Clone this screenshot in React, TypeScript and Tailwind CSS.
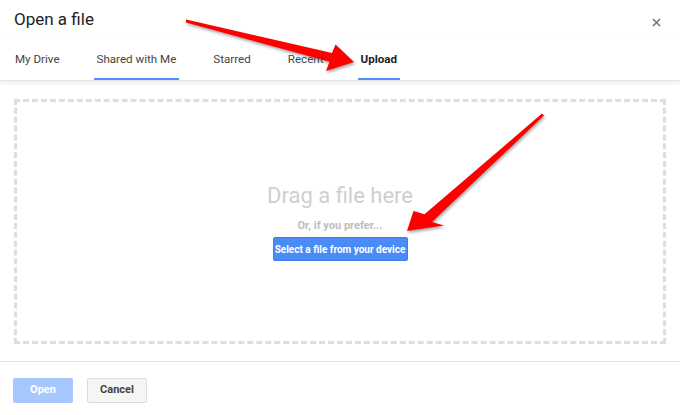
import React from "react";

const tabs = ["My Drive", "Shared with Me", "Starred", "Recent", "Upload"];

function Arrows() {
  return (
    <svg
      className="absolute inset-0 pointer-events-none"
      width="680"
      height="415"
      viewBox="0 0 680 415"
      style={{ filter: "drop-shadow(1px 2px 1.5px rgba(0,0,0,0.35))" }}
    >
      {/* top arrow pointing at Upload tab */}
      <polygon
        fill="#f00"
        points="186,19.5 332,53 335.5,44.5 354,62 326,71 329.5,61.8 186,22.5"
      />
      {/* arrow pointing at select button */}
      <polygon
        fill="#f00"
        points="544,115.5 432,222 444,225.5 407,231 413.5,211 424.5,214.2 542,113.5"
      />
    </svg>
  );
}

export default function App() {
  return (
    <div
      className="relative w-[680px] h-[415px] bg-white overflow-hidden flex flex-col"
      style={{ fontFamily: "Roboto, Arial, sans-serif" }}
    >
      <div className="h-[40px] flex items-start justify-between pl-[14px] pr-[19px] pt-[7px]">
        <h1 className="text-[17px] text-[#222] leading-[24px]">Open a file</h1>
        <svg width="9" height="9" viewBox="0 0 9 9" className="mt-[11px]">
          <path d="M1 1L8 8M8 1L1 8" stroke="#777" strokeWidth="1.6" />
        </svg>
      </div>

      <div className="h-[41px] flex items-stretch gap-[31px] pl-[12px] border-b border-[#e5e5e5] shadow-[0_2px_4px_rgba(0,0,0,0.08)] relative z-10">
        {tabs.map((t) => {
          const active = t === "Shared with Me" || t === "Upload";
          return (
            <div
              key={t}
              className={`px-[3px] pt-[2px] flex items-center text-[11.6px] border-b-[2px] ${
                active ? "border-[#4d90fe]" : "border-transparent"
              } ${t === "Upload" ? "font-bold text-[#222]" : "text-[#444]"}`}
            >
              {t}
            </div>
          );
        })}
      </div>

      <div className="px-[14px] pt-[18px] pb-[17px] border-b border-[#e5e5e5]">
        <div className="h-[245px] border-[3px] border-dashed border-[#dedede] flex flex-col items-center">
          <div className="mt-[80px] text-[22px] text-[#cfcfcf] leading-[28px]">Drag a file here</div>
          <div className="mt-[9px] text-[11px] font-bold text-[#bdbdbd] leading-[14px]">Or, if you prefer...</div>
          <button className="mt-[4px] w-[135px] h-[24px] rounded-[2px] bg-[#4a8cf7] border border-[#3b7de9] text-white text-[10px] font-bold whitespace-nowrap">
            Select a file from your device
          </button>
        </div>
      </div>

      <div className="flex gap-[14px] pl-[13px] pt-[16px]">
        <button className="w-[60px] h-[25px] rounded-[2px] bg-[#a6c8ff] text-white text-[11px] font-bold">
          Open
        </button>
        <button className="w-[60px] h-[25px] rounded-[2px] bg-[#f5f5f5] border border-[#dcdcdc] text-[#444] text-[11px] font-bold">
          Cancel
        </button>
      </div>

      <Arrows />
    </div>
  );
}
